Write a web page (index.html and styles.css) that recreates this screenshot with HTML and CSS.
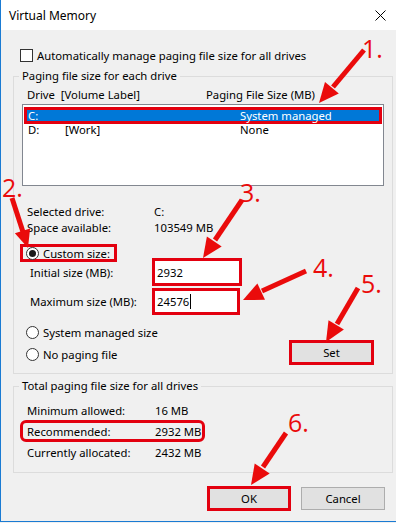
FILE: index.html
```html
<!DOCTYPE html>
<html lang="en">
<head>
    <meta charset="UTF-8" />
    <title>Virtual Memory</title>
    <link rel="stylesheet" href="styles.css">
</head>
<body>
    <div class="window">
        <div class="titlebar">
            <span class="title">Virtual Memory</span>
            <svg class="close" width="11" height="11" viewBox="0 0 11 11">
                <path d="M0.5 0.5 L10.5 10.5 M10.5 0.5 L0.5 10.5" stroke="#000" stroke-width="1" fill="none" />
            </svg>
        </div>

        <div class="auto-row">
            <span class="checkbox"></span>
            <span>Automatically manage paging file size for all drives</span>
        </div>

        <fieldset class="group group-drives">
            <legend>Paging file size for each drive</legend>
            <div class="drive-head">
                <span>Drive&nbsp;&nbsp;[Volume Label]</span>
                <span>Paging File Size (MB)</span>
            </div>
            <div class="drive-list">
                <div class="drive-row selected marked">
                    <span>C:</span><span></span><span>System managed</span>
                </div>
                <div class="drive-row">
                    <span>D:</span><span>[Work]</span><span>None</span>
                </div>
            </div>

            <div class="info-grid">
                <span>Selected drive:</span><span>C:</span>
                <span>Space available:</span><span>103549 MB</span>
            </div>

            <div class="radio-row custom marked">
                <span class="radio checked"></span>
                <span>Custom size:</span>
            </div>

            <div class="size-grid">
                <span>Initial size (MB):</span>
                <div class="field marked first">2932</div>
                <span>Maximum size (MB):</span>
                <div class="field marked second">24576<span class="caret"></span></div>
            </div>

            <div class="options">
                <div class="option-list">
                    <div class="radio-row">
                        <span class="radio"></span>
                        <span>System managed size</span>
                    </div>
                    <div class="radio-row">
                        <span class="radio"></span>
                        <span>No paging file</span>
                    </div>
                </div>
                <div class="btn marked set-btn">Set</div>
            </div>
        </fieldset>

        <fieldset class="group group-total">
            <legend>Total paging file size for all drives</legend>
            <div class="total-row">
                <span>Minimum allowed:</span><span>16 MB</span>
            </div>
            <div class="total-row recommended marked">
                <span>Recommended:</span><span>2932 MB</span>
            </div>
            <div class="total-row last">
                <span>Currently allocated:</span><span>2432 MB</span>
            </div>
        </fieldset>

        <div class="buttons">
            <div class="btn marked ok-btn">OK</div>
            <div class="btn cancel-btn">Cancel</div>
        </div>

        <!-- red annotation marks drawn over the dialog -->
        <svg class="annotations" width="396" height="523" viewBox="0 0 396 523">
            <g class="step">
                <text x="362" y="58">1.</text>
                <line x1="364" y1="50" x2="333" y2="87" />
                <polygon points="319,103 325,82 338.8,93.6" />
            </g>
            <g class="step">
                <text x="2" y="197">2.</text>
                <line x1="12" y1="198" x2="23" y2="232" />
                <polygon points="28,248 14.9,233.3 30.1,228.5" />
            </g>
            <g class="step">
                <text x="240" y="202">3.</text>
                <line x1="242" y1="200" x2="215" y2="240" />
                <polygon points="203,258 206.9,236.4 221.7,246.6" />
            </g>
            <g class="step">
                <text x="313" y="277">4.</text>
                <line x1="306" y1="271" x2="262" y2="291" />
                <polygon points="243,300 257.4,283.4 265,299.8" />
            </g>
            <g class="step">
                <text x="361" y="293">5.</text>
                <line x1="358" y1="288" x2="337" y2="324" />
                <polygon points="326,342 328.5,320.2 343.9,329.4" />
            </g>
            <g class="step">
                <text x="288" y="432">6.</text>
                <line x1="286" y1="433" x2="263" y2="467" />
                <polygon points="251,485 254.7,463.4 269.7,473.4" />
            </g>
        </svg>
    </div>
</body>
</html>
```

FILE: styles.css
```css
body {
    margin: 0;
    background: #f0f0f0;
    font-family: "Noto Sans", "Open Sans", sans-serif;
    font-size: 11.3px;
    color: #000;
    white-space: nowrap;
}
.window {
    position: relative;
    width: 396px;
    height: 522px;
    box-sizing: border-box;
    border-left: 1px solid #1a7bd3;
    border-bottom: 1px solid #1a7bd3;
    background: #f0f0f0;
    overflow: hidden;
}
.titlebar {
    height: 30px;
    background: #fff;
    display: flex;
    align-items: center;
    justify-content: space-between;
    padding: 0 10px 0 8px;
}
.title {
    font-size: 12px;
}
.close {
    display: block;
}

/* checkbox + radio */
.auto-row {
    display: flex;
    align-items: center;
    gap: 4px;
    height: 13px;
    margin: 19px 0 0 19px;
}
.checkbox,
.radio {
    width: 13px;
    height: 13px;
    box-sizing: border-box;
    border: 1px solid #333;
    background: #fff;
    flex: none;
}
.radio {
    border-radius: 50%;
    position: relative;
}
.radio.checked::after {
    content: "";
    position: absolute;
    left: 2px;
    top: 2px;
    width: 7px;
    height: 7px;
    border-radius: 50%;
    background: #1a1a1a;
}

/* group boxes */
.group {
    margin: 6px 3px 0 12px;
    padding: 0 0 8px;
    border: 1px solid #dcdcdc;
    min-width: 0;
}
.group legend {
    margin-left: 5px;
    padding: 0 3px;
    line-height: 16px;
}
.group-total {
    margin-top: 4px;
    padding-bottom: 10px;
}

.drive-head {
    display: grid;
    grid-template-columns: 179px auto;
    line-height: 14px;
    margin: 4px 0 0 13px;
}
.drive-list {
    margin: 2px 8px 0;
    height: 82px;
    box-sizing: border-box;
    border: 1px solid #828790;
    background: #fff;
    padding-top: 1px;
}
.drive-row {
    display: grid;
    grid-template-columns: 37px 175px auto;
    height: 14px;
    line-height: 14px;
    margin: -1px 1px 0;
    padding-left: 4px;
}
.drive-row.selected {
    height: 17px;
    line-height: 11px;
    margin-top: 1px;
    padding-left: 1px;
    background: #0078d7;
    color: #fff;
}

.info-grid {
    display: grid;
    grid-template-columns: 127px auto;
    line-height: 16px;
    margin: 18px 0 0 13px;
}

.radio-row {
    display: flex;
    align-items: center;
    gap: 4px;
    height: 16px;
}
.radio-row.custom {
    width: 97px;
    height: 18px;
    margin: 8px 0 0 6px;
    padding-left: 3px;
}

.size-grid {
    display: grid;
    grid-template-columns: 122px auto;
    grid-template-rows: 28px 27px;
    row-gap: 2px;
    align-items: center;
    margin: -4px 0 0 16px;
}
.field {
    height: 100%;
    box-sizing: border-box;
    background: #fff;
    padding-left: 2px;
    display: flex;
    align-items: center;
}
.field.first {
    width: 90px;
}
.field.second {
    width: 88px;
}
.caret {
    width: 1px;
    height: 15px;
    background: #000;
    margin-left: 1px;
}

.options {
    display: flex;
    justify-content: space-between;
    margin: 9px 18px 0 12px;
}
.option-list {
    display: flex;
    flex-direction: column;
    gap: 6px;
}

/* buttons */
.btn {
    display: flex;
    align-items: center;
    justify-content: center;
    box-sizing: border-box;
    background: #e1e1e1;
    border: 1px solid #adadad;
}
.set-btn {
    width: 85px;
    height: 25px;
    margin-top: 16px;
}

.total-row {
    display: grid;
    grid-template-columns: 128px auto;
    align-items: center;
    height: 20px;
    margin-left: 13px;
}
.total-row:first-of-type {
    margin-top: 6px;
}
.total-row.recommended {
    height: 22px;
    width: 185px;
    box-sizing: border-box;
    margin-left: 6px;
    padding-left: 4px;
    border-radius: 6px;
}

.buttons {
    display: flex;
    justify-content: flex-end;
    align-items: center;
    gap: 10px;
    margin: 13px 11px 0 0;
}
.ok-btn {
    width: 84px;
    height: 25px;
}
.cancel-btn {
    width: 84px;
    height: 23px;
}

/* red highlight boxes */
.marked {
    border: 3px solid #e3000f;
    box-sizing: border-box;
}

.annotations {
    position: absolute;
    left: -1px;
    top: 0;
    pointer-events: none;
}
.step line {
    stroke: #ea0b0b;
    stroke-width: 5;
}
.step polygon {
    fill: #ea0b0b;
}
.step text {
    fill: #ea0b0b;
    font-family: "Open Sans", "Noto Sans", sans-serif;
    font-size: 25px;
}
```
